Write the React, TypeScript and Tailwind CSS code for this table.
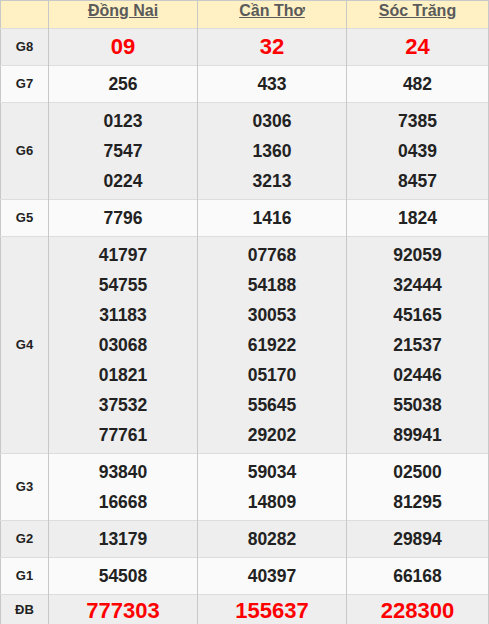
const provinces = ["Đồng Nai", "Cần Thơ", "Sóc Trăng"];

type Row = { label: string; values: string[][]; kind?: "g8" | "db" };

const rows: Row[] = [
  { label: "G8", values: [["09"], ["32"], ["24"]], kind: "g8" },
  { label: "G7", values: [["256"], ["433"], ["482"]] },
  {
    label: "G6",
    values: [
      ["0123", "7547", "0224"],
      ["0306", "1360", "3213"],
      ["7385", "0439", "8457"],
    ],
  },
  { label: "G5", values: [["7796"], ["1416"], ["1824"]] },
  {
    label: "G4",
    values: [
      ["41797", "54755", "31183", "03068", "01821", "37532", "77761"],
      ["07768", "54188", "30053", "61922", "05170", "55645", "29202"],
      ["92059", "32444", "45165", "21537", "02446", "55038", "89941"],
    ],
  },
  {
    label: "G3",
    values: [
      ["93840", "16668"],
      ["59034", "14809"],
      ["02500", "81295"],
    ],
  },
  { label: "G2", values: [["13179"], ["80282"], ["29894"]] },
  { label: "G1", values: [["54508"], ["40397"], ["66168"]] },
  { label: "ĐB", values: [["777303"], ["155637"], ["228300"]], kind: "db" },
];

export default function App() {
  return (
    <div className="w-[489px] h-[624px] bg-white font-['Liberation_Sans']">
      <table className="w-[489px] border-collapse table-fixed border border-[#c8c8c8]">
        <colgroup>
          <col className="w-[48px]" />
          <col className="w-[149px]" />
          <col className="w-[149px]" />
          <col />
        </colgroup>
        <thead>
          <tr className="bg-[#fff1c4] h-[28px]">
            <th className="border-r border-[#c8c8c8]" />
            {provinces.map((p) => (
              <th
                key={p}
                className="border-r border-[#c8c8c8] text-[16px] font-bold text-[#5a5a5a] underline leading-[20px] pb-[5px] pt-0 align-top"
              >
                {p}
              </th>
            ))}
          </tr>
        </thead>
        <tbody>
          {rows.map((r, i) => (
            <tr
              key={r.label}
              className={`${i % 2 === 0 ? "bg-[#eeeeee]" : "bg-[#fafafa]"} border-t border-[#dddddd]`}
            >
              <td className="border-r border-[#c8c8c8] text-center text-[13px] font-bold text-[#222]">
                {r.label}
              </td>
              {r.values.map((vals, j) => (
                <td
                  key={j}
                  className={`border-r border-[#c8c8c8] text-center ${r.kind === "db" ? "pt-[3px] pb-0" : "py-[3px]"}`}
                >
                  {vals.map((v) => (
                    <div
                      key={v}
                      className={
                        r.kind === "g8"
                          ? "text-[22px] font-bold text-[#f00] leading-[30px]"
                          : r.kind === "db"
                            ? "text-[22px] font-bold text-[#f00] leading-[26px]"
                            : "text-[17.5px] font-bold text-[#222] leading-[30px]"
                      }
                    >
                      {v}
                    </div>
                  ))}
                </td>
              ))}
            </tr>
          ))}
        </tbody>
      </table>
    </div>
  );
}
